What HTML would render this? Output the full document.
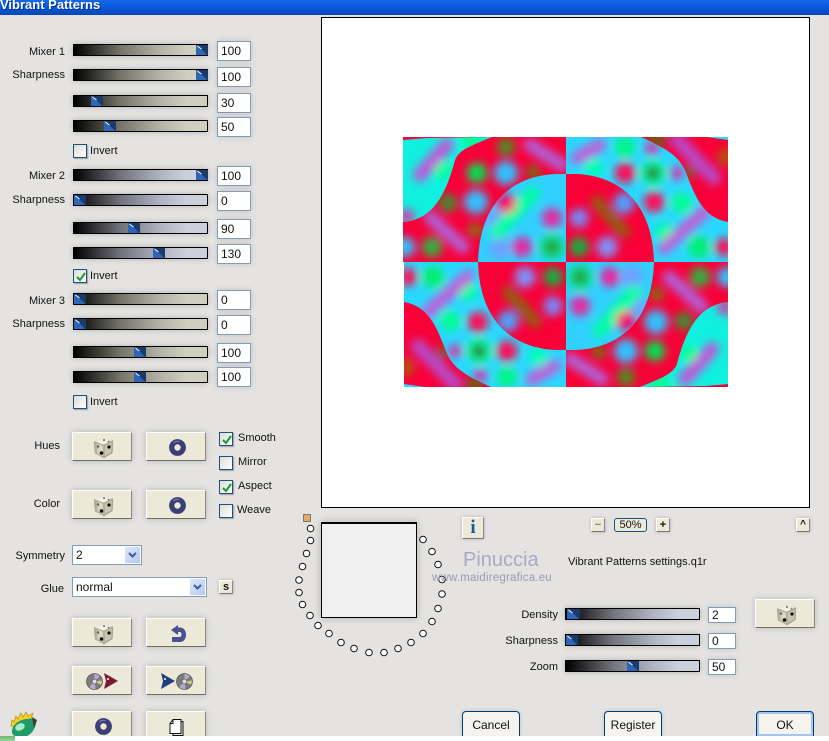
<!DOCTYPE html>
<html><head><meta charset="utf-8"><style>
html,body{margin:0;padding:0;background:#fff}
#p{position:relative;width:829px;height:741px;overflow:hidden;background:#fff;font:11px "Liberation Sans",sans-serif;color:#111}
#m{position:absolute;left:0;top:0;width:829px;height:736px;overflow:hidden;background:#e4e3e1}
#m>*{position:absolute;box-sizing:border-box}
.tb{left:0;top:0;width:829px;height:15px;background:linear-gradient(#1768e8,#0a5ae0 40%,#0846b8);color:#fff;font-weight:bold;font-size:13px;line-height:9px;padding-left:0;text-shadow:1px 1px 0 #02308a;white-space:nowrap}
.l{left:0;width:65px;text-align:right;height:14px;line-height:14px}
.r{left:450px;width:108px;text-align:right;height:14px;line-height:14px}
.s{left:73px;width:135px;height:12px;border:1px solid #000;background:linear-gradient(90deg,#000,#747469 35%,#b4b4a6 65%,#cfcfc0 85%);box-shadow:0 0 6px rgba(0,0,0,.22)}
.b{background:linear-gradient(90deg,#000,#72727c 35%,#b0b3c1 65%,#ccd0dc 85%)}
.s i{position:absolute;top:0;height:10px;width:12px;background:linear-gradient(45deg,#2c66b4 50%,#1a3a6c 52%)}
.s i:before{content:"";position:absolute;left:1px;top:2px;width:5px;height:1px;background:#fff;transform:rotate(38deg)}
.in{left:217px;width:34px;height:20px;background:#fff;border:1px solid #7f9db9;font-size:12px;line-height:18px;padding-left:3px;box-shadow:0 0 6px rgba(0,0,0,.14)}
.ins{left:708px;width:28px;height:16px;line-height:15px;padding-left:3px}
.c{width:14px;height:14px;border:1px solid #1c5180;background:linear-gradient(135deg,#dcdcd6,#fff);box-shadow:1px 1px 1px rgba(0,0,0,.3)}
.c svg{position:absolute;left:1px;top:1px}
.t{height:14px;line-height:14px;white-space:nowrap}
.btn{width:60px;height:29px;background:#ece9d8;border-top:1px solid #fff;border-left:1px solid #fff;border-right:1px solid #8a8a80;border-bottom:1px solid #6f6f68;box-shadow:0 0 6px rgba(0,0,0,.2)}
.btn svg{position:absolute;left:0;top:0}
.sm{width:14px;height:14px;background:#ece9d8;border:1px solid #fff;border-right-color:#888;border-bottom-color:#777;box-shadow:0 0 3px rgba(0,0,0,.25);text-align:center;font-weight:bold;line-height:12px;font-size:11px}
.sel{background:#fff;border:1px solid #7f9db9;height:20px;line-height:18px;padding-left:3px;font-size:12px}
.sel b{position:absolute;right:1px;top:1px;width:15px;height:16px;background:linear-gradient(135deg,#dfe8fb,#b4c8f2)}
.sel svg{position:absolute;left:3px;top:5px}
.pb{height:26px;background:#f4f3ee;border:1px solid #003c74;border-radius:4px 4px 0 0;text-align:center;line-height:26px;font-size:12px;box-shadow:0 0 4px rgba(0,0,0,.15)}
</style></head><body><div id="p"><div id="m">
<svg width="0" height="0" style="left:0;top:0"><defs>
<linearGradient id="dl" x1="0" y1="0" x2="1" y2="0"><stop offset="0" stop-color="#a09e8a"/><stop offset=".5" stop-color="#dcdac6"/><stop offset="1" stop-color="#d8d6c2"/></linearGradient>
<symbol id="dice" viewBox="0 0 60 29"><g stroke-linejoin="round" stroke-width="1.400"><path d="M21.500 9L31 4.500L39.500 8L31 12.500Z" fill="#f2f1e6" stroke="#e6e5d8"/><path d="M21.500 9L31 12.500V24.500L22.500 20Z" fill="url(#dl)" stroke="#b0ae9a"/><path d="M31 12.500L39.500 8L39 19.500L31 24.500Z" fill="#c8c6b0" stroke="#a8a690"/><circle cx="31" cy="7" r="1" fill="#666"/><circle cx="35.500" cy="8.500" r=".9" fill="#777"/><circle cx="25" cy="13.500" r="1.300" fill="#666"/><circle cx="28.500" cy="20" r="1.800" fill="#0c0c0c"/><circle cx="36" cy="14" r="1.600" fill="#0c0c0c"/></g></symbol>
<symbol id="tor" viewBox="0 0 60 29"><circle cx="30.500" cy="14.500" r="5.800" fill="none" stroke="#3b3f74" stroke-width="5.200"/><path d="M26.500 10a6 6 0 0 1 6-1.500" stroke="#8084b0" stroke-width="1" fill="none"/></symbol>
<symbol id="dsk" viewBox="0 0 16 16"><circle cx="8" cy="8" r="7.500" fill="#7c7c80" stroke="#444" stroke-width=".6"/><path d="M8 8L3 13A7 7 0 0 0 9 15zM8 8L13 3A7 7 0 0 0 8 1z" fill="#b8a8d0"/><path d="M8 8L14 11A7 7 0 0 0 15 7z" fill="#d8c880"/><circle cx="8" cy="8" r="2.300" fill="#ddd" stroke="#555" stroke-width=".6"/></symbol>
</defs></svg>

<div class="tb">Vibrant Patterns</div>

<!-- labels -->
<div class="l" style="top:45px">Mixer 1</div><div class="l" style="top:68px">Sharpness</div>
<div class="l" style="top:169px">Mixer 2</div><div class="l" style="top:193px">Sharpness</div>
<div class="l" style="top:294px">Mixer 3</div><div class="l" style="top:317px">Sharpness</div>
<div class="l" style="top:439px;width:60px">Hues</div><div class="l" style="top:497px;width:60px">Color</div>
<div class="l" style="top:549px">Symmetry</div><div class="l" style="top:582px;width:64px">Glue</div>

<!-- sliders group 1 -->
<div class="s" style="top:44px"><i style="left:122px"></i></div><div class="in" style="top:41px">100</div>
<div class="s" style="top:69px"><i style="left:122px"></i></div><div class="in" style="top:67px">100</div>
<div class="s" style="top:95px"><i style="left:17px"></i></div><div class="in" style="top:93px">30</div>
<div class="s" style="top:120px"><i style="left:30px"></i></div><div class="in" style="top:117px">50</div>
<div class="c" style="left:73px;top:144px"></div><div class="t" style="left:90px;top:144px">Invert</div>
<!-- group 2 -->
<div class="s b" style="top:169px"><i style="left:122px"></i></div><div class="in" style="top:166px">100</div>
<div class="s b" style="top:194px"><i style="left:0"></i></div><div class="in" style="top:191px">0</div>
<div class="s b" style="top:222px"><i style="left:54px"></i></div><div class="in" style="top:219px">90</div>
<div class="s b" style="top:247px"><i style="left:79px"></i></div><div class="in" style="top:244px">130</div>
<div class="c" style="left:73px;top:269px"><svg width="12" height="12"><path d="M2 6l3 3 5-7" stroke="#1a9a30" stroke-width="2" fill="none"/></svg></div><div class="t" style="left:90px;top:269px">Invert</div>
<!-- group 3 -->
<div class="s" style="top:293px"><i style="left:0"></i></div><div class="in" style="top:290px">0</div>
<div class="s" style="top:318px"><i style="left:0"></i></div><div class="in" style="top:315px">0</div>
<div class="s" style="top:346px"><i style="left:60px"></i></div><div class="in" style="top:343px">100</div>
<div class="s" style="top:371px"><i style="left:60px"></i></div><div class="in" style="top:367px">100</div>
<div class="c" style="left:73px;top:395px"></div><div class="t" style="left:90px;top:395px">Invert</div>

<!-- buttons -->
<div class="btn" style="left:72px;top:432px"><svg width="60" height="29"><use href="#dice"/></svg></div>
<div class="btn" style="left:146px;top:432px"><svg width="60" height="29"><use href="#tor"/></svg></div>
<div class="btn" style="left:72px;top:490px"><svg width="60" height="29"><use href="#dice"/></svg></div>
<div class="btn" style="left:146px;top:490px"><svg width="60" height="29"><use href="#tor"/></svg></div>
<div class="btn" style="left:72px;top:618px"><svg width="60" height="29"><use href="#dice"/></svg></div>
<div class="btn" style="left:146px;top:618px"><svg width="60" height="29"><path d="M31 6L24 11L31 16V13H33C35 13 35 18 33 18H25V23H33C41 23 41 8.500 33 8.500H31Z" fill="#4a5090"/></svg></div>
<div class="btn" style="left:72px;top:666px"><svg width="60" height="29"><use href="#dsk" x="13" y="6" width="17" height="17"/><path d="M31 6l14 8-14 8 2-8z" fill="#7c1830"/><circle cx="35" cy="12" r="1" fill="#fff"/></svg></div>
<div class="btn" style="left:146px;top:666px"><svg width="60" height="29"><path d="M14 6l14 8-14 8 2-8z" fill="#1c4080"/><circle cx="18" cy="12" r="1" fill="#fff"/><use href="#dsk" x="29" y="6" width="17" height="17"/></svg></div>
<div class="btn" style="left:72px;top:711px;height:30px"><svg width="60" height="29"><use href="#tor"/></svg></div>
<div class="btn" style="left:146px;top:711px;height:30px"><svg width="60" height="29"><path d="M26 7.500h8v14h-11v-10z" fill="#fff" stroke="#111" stroke-width="1"/><path d="M34 9.500h2v14h-10v-2" fill="none" stroke="#111" stroke-width="1"/><path d="M26 7.500v4h-3" fill="none" stroke="#111"/></svg></div>

<!-- checks -->
<div class="c" style="left:219px;top:432px"><svg width="12" height="12"><path d="M2 6l3 3 5-7" stroke="#1a9a30" stroke-width="2" fill="none"/></svg></div><div class="t" style="left:238px;top:431px">Smooth</div>
<div class="c" style="left:219px;top:456px"></div><div class="t" style="left:238px;top:455px">Mirror</div>
<div class="c" style="left:219px;top:480px"><svg width="12" height="12"><path d="M2 6l3 3 5-7" stroke="#1a9a30" stroke-width="2" fill="none"/></svg></div><div class="t" style="left:238px;top:479px">Aspect</div>
<div class="c" style="left:219px;top:504px"></div><div class="t" style="left:237px;top:503px">Weave</div>

<!-- selects -->
<div class="sel" style="left:72px;top:545px;width:70px">2<b><svg width="9" height="6"><path d="M1 1l3.500 3.500L8 1" stroke="#3a5a9a" stroke-width="2" fill="none"/></svg></b></div>
<div class="sel" style="left:72px;top:577px;width:135px">normal<b><svg width="9" height="6"><path d="M1 1l3.500 3.500L8 1" stroke="#3a5a9a" stroke-width="2" fill="none"/></svg></b></div>
<div class="sm" style="left:219px;top:580px">s</div>

<!-- preview -->
<div style="left:321px;top:17px;width:489px;height:491px;background:#fff;border:1px solid #000"></div>
<svg width="325" height="250" viewBox="403 137 325 250" style="left:403px;top:137px">
<defs>
<filter id="b2" filterUnits="userSpaceOnUse" x="380" y="110" width="380" height="180"><feGaussianBlur stdDeviation="4.600"/></filter>
<clipPath id="qTL"><rect x="403" y="137" width="163" height="125"/></clipPath>
<clipPath id="qTR"><rect x="566" y="137" width="162" height="125"/></clipPath>
<clipPath id="cTLc"><path d="M403 140L427 138L492 137C470 146 459 150 455 160C447 190 435 220 403 222Z"/></clipPath>
<clipPath id="cTLd"><path d="M566 174C522 172 480 194 478 262L566 262Z"/></clipPath>
<clipPath id="cTRc"><path d="M641 137L707 137L728 140L728 222C703 218 695 195 688 178C682 158 670 150 641 137Z"/></clipPath>
<clipPath id="cTRd"><path d="M566 174C610 172 652 194 654 262L566 262Z"/></clipPath>
<g id="TL" clip-path="url(#qTL)">
 <rect x="403" y="137" width="163" height="125" fill="#f80038"/>
 <g filter="url(#b2)" stroke-linecap="round">
  <path d="M430 217L463 247" stroke="#b060d8" stroke-width="13"/>
  <path d="M530 145L562 165" stroke="#b060d8" stroke-width="13"/>
  <circle cx="477" cy="173" r="10" fill="#00e050"/>
  <circle cx="506" cy="173" r="12" fill="#30c0ff"/>
  <circle cx="476" cy="202" r="12" fill="#30c0ff"/>
  <circle cx="448" cy="203" r="9" fill="#408c30"/>
  <circle cx="506" cy="147" r="9" fill="#508c20"/>
  <circle cx="533" cy="172" r="7" fill="#707010"/>
  <circle cx="432" cy="247" r="10" fill="#30b040"/>
  <circle cx="405" cy="247" r="10" fill="#30c0ff"/>
  <circle cx="475" cy="230" r="7" fill="#807010"/>
 </g>
 <g clip-path="url(#cTLc)"><rect x="403" y="137" width="100" height="90" fill="#10f0e0"/>
  <g filter="url(#b2)" stroke-linecap="round"><path d="M447 145L420 175" stroke="#c058d8" stroke-width="14"/><circle cx="443" cy="170" r="8" fill="#00ff90"/><circle cx="472" cy="139" r="10" fill="#00ff90"/><circle cx="407" cy="217" r="8" fill="#d040b0"/></g></g>
 <g clip-path="url(#cTLd)"><rect x="478" y="174" width="88" height="88" fill="#30d0ff"/>
  <g filter="url(#b2)" stroke-linecap="round"><circle cx="495" cy="220" r="10" fill="#70a0ff"/><circle cx="500" cy="248" r="11" fill="#70a0ff"/><path d="M533 193L497 232" stroke="#00ffa0" stroke-width="14"/><circle cx="506" cy="203" r="10" fill="#f81070"/><circle cx="552" cy="218" r="10" fill="#e828a0"/><circle cx="522" cy="247" r="10" fill="#e828a0"/><circle cx="552" cy="247" r="13" fill="#00e890"/><circle cx="552" cy="247" r="8" fill="#20a030"/></g></g>
</g>
<g id="TR" clip-path="url(#qTR)">
 <rect x="566" y="137" width="162" height="125" fill="#28d8ff"/>
 <g filter="url(#b2)" stroke-linecap="round">
  <circle cx="594" cy="168" r="9" fill="#00ffb0"/>
  <circle cx="664" cy="232" r="9" fill="#00ffa0"/>
  <path d="M664 248L704 212" stroke="#c060d8" stroke-width="13"/>
  <path d="M577 158L600 145" stroke="#c060d8" stroke-width="13"/>
  <circle cx="653" cy="173" r="13" fill="#00ffa0"/><circle cx="653" cy="173" r="8" fill="#209030"/>
  <circle cx="625" cy="173" r="10.500" fill="#ff1058"/><circle cx="654" cy="202" r="10.500" fill="#ff1058"/>
  <circle cx="682" cy="203" r="10" fill="#00ff90"/><circle cx="625" cy="147" r="10" fill="#00f880"/>
  <circle cx="699" cy="247" r="11" fill="#00f070"/><circle cx="724" cy="247" r="9" fill="#ff1058"/>
  <circle cx="677" cy="173" r="7" fill="#d838a8"/><circle cx="652" cy="148" r="7" fill="#d838a8"/>
 </g>
 <g clip-path="url(#cTRc)"><rect x="640" y="137" width="90" height="90" fill="#f80038"/>
  <g filter="url(#b2)" stroke-linecap="round"><path d="M677 140L714 178" stroke="#b848c8" stroke-width="14"/><circle cx="657" cy="140" r="9" fill="#705c10"/><circle cx="689" cy="172" r="6" fill="#706810"/><circle cx="726" cy="157" r="9" fill="#b85008"/></g></g>
 <g clip-path="url(#cTRd)"><rect x="566" y="174" width="88" height="88" fill="#f80038"/>
  <g filter="url(#b2)" stroke-linecap="round"><path d="M597 202L624 232" stroke="#906010" stroke-width="12"/><circle cx="624" cy="203" r="10.500" fill="#50a0ff"/><circle cx="579" cy="218" r="9.500" fill="#7888f8"/><circle cx="607" cy="247" r="10.500" fill="#8090f8"/><circle cx="579" cy="247" r="9.500" fill="#10b040"/></g></g>
</g>
</defs>
<use href="#TL"/><use href="#TR"/>
<use href="#TR" transform="rotate(180 566 262)"/><use href="#TL" transform="rotate(180 566 262)"/>
</svg>

<!-- swatch -->
<div style="left:303px;top:514px;width:8px;height:8px;background:#e8a868;border:1px solid #777"></div>
<div style="left:321px;top:522px;width:96px;height:96px;background:#f0f0f0;border:1px solid #000;border-width:2px 1px 1px 1px;box-shadow:0 0 7px rgba(0,0,0,.25)"></div>
<svg width="160" height="160" viewBox="290 500 160 160" style="left:290px;top:500px" fill="#fff" stroke="#111" stroke-width="1">
<circle cx="310.500" cy="528.500" r="3.300"/><circle cx="310.500" cy="540.500" r="3.300"/><circle cx="306.500" cy="553.500" r="3.300"/><circle cx="302.500" cy="566.500" r="3.300"/><circle cx="299" cy="580" r="3.300"/><circle cx="299" cy="592.500" r="3.300"/><circle cx="302.500" cy="604.500" r="3.300"/><circle cx="310" cy="615.500" r="3.300"/><circle cx="318" cy="625.500" r="3.300"/><circle cx="329" cy="633.500" r="3.300"/><circle cx="341" cy="642.500" r="3.300"/><circle cx="354" cy="648.500" r="3.300"/><circle cx="369" cy="652.500" r="3.300"/><circle cx="384" cy="652.500" r="3.300"/><circle cx="398" cy="648.500" r="3.300"/><circle cx="411" cy="642.500" r="3.300"/><circle cx="423" cy="633.500" r="3.300"/><circle cx="432" cy="621.500" r="3.300"/><circle cx="438" cy="608.500" r="3.300"/><circle cx="442" cy="594" r="3.300"/><circle cx="442" cy="579.500" r="3.300"/><circle cx="438" cy="564.500" r="3.300"/><circle cx="432" cy="551.500" r="3.300"/><circle cx="423" cy="539.500" r="3.300"/>
</svg>
<div class="sm" style="left:462px;top:517px;width:22px;height:22px;font:bold 19px/20px 'Liberation Serif',serif;color:#1c5a90">i</div>
<div style="left:463px;top:550px;font-size:20px;line-height:20px;color:#a9a9c6;white-space:nowrap">Pinuccia</div>
<div style="left:432px;top:571px;font-size:11.500px;line-height:14px;letter-spacing:.2px;color:#9a9ab0;white-space:nowrap">www.maidiregrafica.eu</div>

<!-- zoom controls -->
<div class="sm" style="left:591px;top:518px;color:#888">−</div>
<div style="left:614px;top:518px;width:33px;height:14px;background:#ece9d8;border:1px solid #1c5180;border-radius:3px;text-align:center;line-height:13px">50%</div>
<div class="sm" style="left:656px;top:518px">+</div>
<div class="sm" style="left:796px;top:518px;font-size:10px">^</div>
<div class="t" style="left:568px;top:555px">Vibrant Patterns settings.q1r</div>

<!-- bottom sliders -->
<div class="r" style="top:608px">Density</div><div class="r" style="top:634px">Sharpness</div><div class="r" style="top:660px">Zoom</div>
<div class="s b" style="left:565px;top:608px"><i style="left:1px;width:13px"></i></div><div class="in ins" style="top:607px">2</div>
<div class="s b" style="left:565px;top:634px"><i style="left:0"></i></div><div class="in ins" style="top:633px">0</div>
<div class="s b" style="left:565px;top:660px"><i style="left:61px"></i></div><div class="in ins" style="top:659px">50</div>
<div class="btn" style="left:755px;top:599px"><svg width="60" height="29"><use href="#dice"/></svg></div>

<!-- dialog buttons -->
<div class="pb" style="left:462px;top:711px;width:58px">Cancel</div>
<div class="pb" style="left:604px;top:711px;width:58px">Register</div>
<div class="pb" style="left:756px;top:711px;width:58px;border:1px solid #003c74;box-shadow:inset 0 0 0 2px #a8c4ec">OK</div>

<!-- logo -->
<svg width="40" height="32" style="left:4px;top:706px"><path d="M7 20L8 14L10 16L12 10L14 13L17 7L19 11L22 6L24 10L29 7L27 13L14 24Z" fill="#f4d420" stroke="#b88810" stroke-width=".7"/><path d="M8 27C7 20 14 14 22 13C28 12 33 13 32 17C31 24 26 31 18 31C12 31 9 30 8 27Z" fill="#1f9a68"/><ellipse cx="16" cy="21" rx="5" ry="3.500" transform="rotate(-25 16 21)" fill="#a8ecc0"/><path d="M28 11L33 14L30 22Z" fill="#3a3a30"/></svg>
</div>
<div style="position:absolute;left:0;top:736px;width:15px;height:5px;background:linear-gradient(#68b868,#a0d4a0)"></div>
</div></body></html>
